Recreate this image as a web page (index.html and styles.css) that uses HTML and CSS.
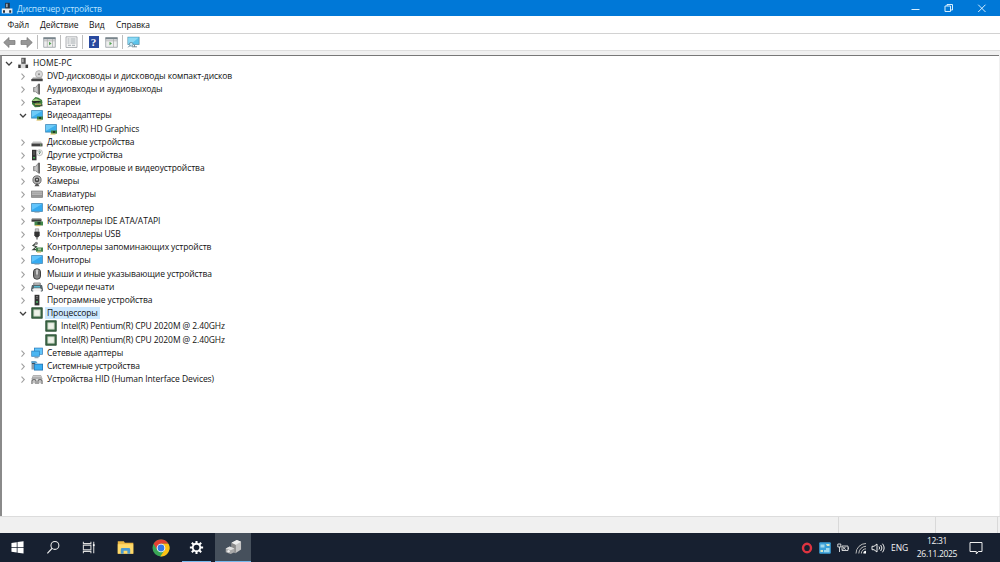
FILE: index.html
```html
<!DOCTYPE html>
<html lang="ru">

<head>
  <meta charset="UTF-8" />
  <meta name="viewport" content="width=device-width, initial-scale=1.0" />
  <title>Диспетчер устройств</title>
  <link rel="stylesheet" href="styles.css">
</head>

<body>
  <!-- иконки -->
  <svg class="sprite">
    <symbol id="close-arrow" viewBox="0 0 8 8"><path d="M2.5 1.6 5.3 4.6 2.5 7.6" fill="none" stroke="#a0a0a0" stroke-width="1.1" /></symbol>
    <symbol id="open-arrow" viewBox="0 0 8 8"><path d="M1 3 4 6 7 3" fill="none" stroke="#404040" stroke-width="1.3" /></symbol>
    <symbol id="pc" viewBox="0 0 12 12">
      <path d="M4.3 .8h4.4V7H4.3z" fill="#555" /><path d="M5.3 1.8h1.2v3.5H5.3z" fill="#ccc" />
      <path d="M1 6.8h10.4v4.4H1z" fill="#d9d9d9" /><path d="M1.3 7.8h2.4v3.2H1.3zM8.5 7.8H11v3.2H8.5z" fill="#3a3a3a" />
    </symbol>
    <symbol id="pc-title" viewBox="0 0 12 12">
      <path d="M4.2 .8h4.6V7H4.2z" fill="#26303c" /><path d="M5.3 1.8h1.2v3.5H5.3z" fill="#c5d5e4" />
      <path d="M.8 6.5h10.6v4.9H.8z" fill="#e9eef2" /><path d="M2 8.3h2v2.5H2zM8.2 8.3h2v2.5h-2z" fill="#26303c" />
    </symbol>
    <symbol id="dvd" viewBox="0 0 12 12">
      <circle cx="8" cy="4.2" r="3.6" fill="#d8d8d8" stroke="#999" stroke-width=".6" /><circle cx="8" cy="4.2" r="1" fill="#888" />
      <path d="M2 7.5h9l.8 2H.3z" fill="#999" /><path d="M.3 9h11.4v2.2H.3z" fill="#484848" />
    </symbol>
    <symbol id="speaker" viewBox="0 0 12 12">
      <path d="M2.5 4.5h2L7.5 1v10L4.5 8.7h-2z" fill="#b4b4b4" stroke="#808080" stroke-width=".8" /><path d="M7 .8h2v10.6H7.6z" fill="#666" />
      <path d="M5 4.5v4" stroke="#e5e5e5" stroke-width=".8" />
    </symbol>
    <symbol id="battery" viewBox="0 0 12 12">
      <path d="M1 4.5 4.5 1l3 .7L11 4l.5 3L9 11 4 11.3 1 8z" fill="#3d7f3d" /><path d="M1 4.5 5 2.5l5 2L6 7z" fill="#a5d287" />
      <path d="M.3 5.2 10 4.7 8 6.6 3 7z" fill="#222" /><path d="M3.5 8.3h8v2h-7z" fill="#46543a" /><path d="M4 8.2h6" stroke="#dfc964" />
    </symbol>
    <symbol id="monitor" viewBox="0 0 12 12">
      <path d="M.2 1.2h11.6v8.6H.2z" fill="#3180b4" /><path d="M.9 1.9h10.2v7.1H.9z" fill="#35aaf0" /><path d="M.9 1.9h10.2L.9 8z" fill="#62c5fc" />
      <path d="M3.5 10.4h5" stroke="#9bb0bb" stroke-width=".8" />
    </symbol>
    <symbol id="video" viewBox="0 0 12 12">
      <path d="M.2 1.2h11.6v8.3H.2z" fill="#3180b4" /><path d="M.9 1.9h10.2v6.8H.9z" fill="#3eb0ed" /><path d="M.9 1.9h10.2L.9 8z" fill="#6fcbf8" />
      <path d="M6 7.5h6v3.2H6z" fill="#3c8145" /><path d="M8 8h2v2H8z" fill="#213c2a" /><path d="M5.5 11.1h5" stroke="#d7b84e" stroke-width=".9" />
    </symbol>
    <symbol id="disk" viewBox="0 0 12 12"><path d="M2 5.5h8l1.5 2.2H.5z" fill="#c4c4c4" /><path d="M.5 7.5h11v2.9H.5z" fill="#404040" /><path d="M9 9h1.5" stroke="#86c880" /></symbol>
    <symbol id="other" viewBox="0 0 12 12">
      <path d="M1 .8h4.5v10.5H1z" fill="#333" /><path d="M2 3h2M2 5h2" stroke="#888" stroke-width=".7" /><path d="M2 8h2v1.5H2z" fill="#46a856" />
      <circle cx="8.5" cy="3.7" r="3" fill="#f2f2f2" stroke="#aaa" stroke-width=".7" />
      <path d="M7.5 2.9q1-1.4 2 0 0 .6-1 1v1.2" fill="none" stroke="#3b6f55" stroke-width=".8" />
    </symbol>
    <symbol id="camera" viewBox="0 0 12 12">
      <circle cx="6" cy="4.9" r="4.1" fill="#b5b5b5" stroke="#666" stroke-width=".9" /><circle cx="6" cy="4.9" r="2.3" fill="#444" /><circle cx="6" cy="4.7" r=".9" fill="#ddd" />
      <path d="M5 8.8h2l1.5 2.5h-5z" fill="#555" />
    </symbol>
    <symbol id="keyboard" viewBox="0 0 12 12"><path d="M.2 2.7h11.6v7H.2z" fill="#6f6f6f" /><path d="M1 3.3h10v4.2H1z" fill="#b5b5b5" /><path d="M1 5.3h10" stroke="#999" stroke-width=".6" /><path d="M1 8.5h10" stroke="#aaa" stroke-width=".7" /></symbol>
    <symbol id="ide" viewBox="0 0 12 12">
      <path d="M1 3h9l1 2H.5z" fill="#aaa" /><path d="M.5 4.5h10v2.2H.5z" fill="#3b3b3b" /><path d="M3.5 6.5H12v4H3.5z" fill="#42864a" />
      <path d="M6.5 7h3v2.5h-3z" fill="#213e29" /><path d="M4.5 10.7h5" stroke="#e0bd54" />
    </symbol>
    <symbol id="usb" viewBox="0 0 12 12"><path d="M4.3 .8h3.4V4H4.3z" fill="#ccc" stroke="#777" stroke-width=".6" /><path d="M3.3 3.8h5.4v3.5L7.3 9.3H4.7L3.3 7.3z" fill="#333" /><path d="M6 9v2.6" stroke="#555" stroke-width="1.2" /></symbol>
    <symbol id="storage" viewBox="0 0 12 12">
      <path d="M5 2 2 4.5l3.5 1.3L2 8.6h4" fill="none" stroke="#3a463c" stroke-width="1.1" /><circle cx="5.3" cy="2.3" r="1.6" fill="#888" />
      <path d="M5 6.5h7v4.2H5z" fill="#43824a" /><path d="M7 7.3h3v2H7z" fill="#a5c9a0" /><path d="M6 11.1h4" stroke="#d7b95c" />
    </symbol>
    <symbol id="mouse" viewBox="0 0 12 12"><rect x="2.5" y=".8" width="7" height="10.4" rx="3.2" fill="#8a8a8a" stroke="#3f3f3f" /><path d="M6 1.5v5" stroke="#fff" stroke-width="1.1" /><path d="M4 3.3v5M8 3.3v5" stroke="#555" stroke-width=".7" /></symbol>
    <symbol id="printer" viewBox="0 0 12 12">
      <path d="M2.7 2h6.6v2H2.7z" fill="#d8d8d8" stroke="#666" stroke-width=".7" /><path d="M1 4h10l1 4.3H0z" fill="#55646a" /><path d="M3 5h6v1.5H3z" fill="#5bbad0" />
      <path d="M2.5 7.3h7l.8 3H1.7z" fill="#f3f3f3" /><path d="M.7 8v2h1.5M11.3 8v2H9.8" fill="none" stroke="#48565a" />
    </symbol>
    <symbol id="software" viewBox="0 0 12 12"><path d="M3.6 .8h4.8v10.6H3.6z" fill="#333" /><path d="M5 2.5h2M5 4.2h2" stroke="#999" stroke-width=".7" /><path d="M5 7.3h2v1.5H5z" fill="#50b96a" /></symbol>
    <symbol id="cpu" viewBox="0 0 12 12"><path d="M.5 .5h11v11H.5z" fill="#3d6947" /><path d="M.8 .8h10.4v10.4H.8z" fill="none" stroke="#2a4a34" stroke-width=".7" /><path d="M2.7 2.7h6.6v6.6H2.7z" fill="#eef2e9" stroke="#a5baa3" stroke-width=".7" /></symbol>
    <symbol id="network" viewBox="0 0 12 12">
      <path d="M3 .7h8.8v7H3z" fill="#2b7aba" /><path d="M3.7 1.4H11V7H3.7z" fill="#62c5fa" />
      <path d="M.3 3.7h8.4v6H.3z" fill="#287cba" /><path d="M1 4.4h7v4.5H1z" fill="#4bb6f2" /><path d="M3.5 10.7h4" stroke="#7d93a3" />
    </symbol>
    <symbol id="system" viewBox="0 0 12 12">
      <path d="M.5 1h4v8.5h-4z" fill="#8d9ba5" /><path d="M1 2.8h3v1.2H1z" fill="#333" />
      <path d="M3 3.7h9v6.8H3z" fill="#2673af" /><path d="M3.7 4.5h7.6v5.2H3.7z" fill="#39aef2" /><path d="M.5 1.2h4.7l1.5 2H.5z" fill="#5ba5d3" />
    </symbol>
    <symbol id="hid" viewBox="0 0 12 12">
      <path d="M2 2.2h8l1.7 4H.3z" fill="#999" /><path d="M2 3.5h8M1.5 5H11" stroke="#ddd" stroke-width=".7" />
      <path d="M1 11V8.2q0-1.7 2-1.7t2 1.7V11M7 11V8.2q0-1.7 2-1.7t2 1.7V11" fill="none" stroke="#666" stroke-width="1.2" /><path d="M3 7v3.3M9 7v3.3" stroke="#888" />
    </symbol>
  </svg>

  <div class="window">
    <div class="title-bar">
      <svg class="title-icon"><use href="#pc-title" /></svg>
      <span class="title">Диспетчер устройств</span>
      <div class="controls">
        <svg viewBox="0 0 12 12"><path d="M1.5 7.5h8" /></svg>
        <svg viewBox="0 0 12 12"><path d="M2 4h5.5v5.5H2zM4 4V2.5h5.5V8h-2" /></svg>
        <svg viewBox="0 0 12 12"><path d="M2.2 2.7 9.5 10M9.5 2.7 2.2 10" /></svg>
      </div>
    </div>

    <div class="menu">
      <span class="m-file">Файл</span>
      <span class="m-action">Действие</span>
      <span class="m-view">Вид</span>
      <span>Справка</span>
    </div>

    <div class="toolbar">
      <svg class="tool" viewBox="0 0 13 12"><path d="M.7 6.5 6 1.5v3h6v4H6v3z" fill="#969696" stroke="#777" stroke-width=".7" /></svg>
      <svg class="tool forward" viewBox="0 0 13 12"><path d="M12.3 6.5 7 1.5v3H1v4h6v3z" fill="#969696" stroke="#777" stroke-width=".7" /></svg>
      <i class="sep"></i>
      <svg class="tool" viewBox="0 0 13 12"><path d="M.7 1.5h11.6v9.8H.7z" fill="#eee" stroke="#989fa5" stroke-width=".8" /><path d="M.5 2.4h12" stroke="#78858c" stroke-width="1.7" /><path d="M4.3 3v8M9.5 3v8M1 4.8h11" stroke="#aaa" stroke-width=".7" /><path d="M6 5.7 8.5 7.5 6 9.3z" fill="#52a052" /></svg>
      <i class="sep"></i>
      <svg class="tool" viewBox="0 0 13 12"><path d="M1 .8h11v10.7H1z" fill="#f5f5f5" stroke="#9ca0a3" stroke-width=".8" /><path d="M2.5 3h2M5.5 3h5M2.5 5h2M5.5 5h5M2.5 7h2M5.5 7h5M3 9.3h3M7 9.3h3" stroke="#9aa2a6" stroke-width=".9" /></svg>
      <i class="sep"></i>
      <span class="help">?</span>
      <svg class="tool" viewBox="0 0 13 12"><path d="M.7 1.5h11.6v9.8H.7z" fill="#eee" stroke="#989fa5" stroke-width=".8" /><path d="M.5 2.4h12" stroke="#78858c" stroke-width="1.7" /><path d="M8.5 3v8M1 4.8h11" stroke="#aaa" stroke-width=".7" /><path d="M4.5 5.7 7 7.5 4.5 9.3z" fill="#52a052" /></svg>
      <i class="sep"></i>
      <svg class="tool" viewBox="0 0 13 12"><path d="M.5 .8h12v8H.5z" fill="#4a8ea9" /><path d="M1.2 1.5h10.6v6.6H1.2z" fill="#5cc3ea" /><path d="M1.2 1.5h10.6L4 8.1H1.2z" fill="#8cd9f4" /><path d="M5 10.8h5M7.5 9v2" stroke="#778c96" /><circle cx="4.2" cy="8.3" r="1.9" fill="#c5e8f5" stroke="#557d91" stroke-width=".7" /><path d="m2.8 9.7-1.6 1.6" stroke="#557d91" /></svg>
    </div>

    <div class="tree">
      <div class="row root"><svg class="arrow"><use href="#open-arrow" /></svg><svg class="icon"><use href="#pc" /></svg><span>HOME-PC</span></div>
      <div class="row"><svg class="arrow"><use href="#close-arrow" /></svg><svg class="icon"><use href="#dvd" /></svg><span>DVD-дисководы и дисководы компакт-дисков</span></div>
      <div class="row"><svg class="arrow"><use href="#close-arrow" /></svg><svg class="icon"><use href="#speaker" /></svg><span>Аудиовходы и аудиовыходы</span></div>
      <div class="row"><svg class="arrow"><use href="#close-arrow" /></svg><svg class="icon"><use href="#battery" /></svg><span>Батареи</span></div>
      <div class="row"><svg class="arrow"><use href="#open-arrow" /></svg><svg class="icon"><use href="#video" /></svg><span>Видеоадаптеры</span></div>
      <div class="row child"><svg class="icon"><use href="#video" /></svg><span>Intel(R) HD Graphics</span></div>
      <div class="row"><svg class="arrow"><use href="#close-arrow" /></svg><svg class="icon"><use href="#disk" /></svg><span>Дисковые устройства</span></div>
      <div class="row"><svg class="arrow"><use href="#close-arrow" /></svg><svg class="icon"><use href="#other" /></svg><span>Другие устройства</span></div>
      <div class="row"><svg class="arrow"><use href="#close-arrow" /></svg><svg class="icon"><use href="#speaker" /></svg><span>Звуковые, игровые и видеоустройства</span></div>
      <div class="row"><svg class="arrow"><use href="#close-arrow" /></svg><svg class="icon"><use href="#camera" /></svg><span>Камеры</span></div>
      <div class="row"><svg class="arrow"><use href="#close-arrow" /></svg><svg class="icon"><use href="#keyboard" /></svg><span>Клавиатуры</span></div>
      <div class="row"><svg class="arrow"><use href="#close-arrow" /></svg><svg class="icon"><use href="#monitor" /></svg><span>Компьютер</span></div>
      <div class="row"><svg class="arrow"><use href="#close-arrow" /></svg><svg class="icon"><use href="#ide" /></svg><span>Контроллеры IDE ATA/ATAPI</span></div>
      <div class="row"><svg class="arrow"><use href="#close-arrow" /></svg><svg class="icon"><use href="#usb" /></svg><span>Контроллеры USB</span></div>
      <div class="row"><svg class="arrow"><use href="#close-arrow" /></svg><svg class="icon"><use href="#storage" /></svg><span>Контроллеры запоминающих устройств</span></div>
      <div class="row"><svg class="arrow"><use href="#close-arrow" /></svg><svg class="icon"><use href="#monitor" /></svg><span>Мониторы</span></div>
      <div class="row"><svg class="arrow"><use href="#close-arrow" /></svg><svg class="icon"><use href="#mouse" /></svg><span>Мыши и иные указывающие устройства</span></div>
      <div class="row"><svg class="arrow"><use href="#close-arrow" /></svg><svg class="icon"><use href="#printer" /></svg><span>Очереди печати</span></div>
      <div class="row"><svg class="arrow"><use href="#close-arrow" /></svg><svg class="icon"><use href="#software" /></svg><span>Программные устройства</span></div>
      <div class="row"><svg class="arrow"><use href="#open-arrow" /></svg><svg class="icon"><use href="#cpu" /></svg><span class="selected">Процессоры</span></div>
      <div class="row child"><svg class="icon"><use href="#cpu" /></svg><span>Intel(R) Pentium(R) CPU 2020M @ 2.40GHz</span></div>
      <div class="row child"><svg class="icon"><use href="#cpu" /></svg><span>Intel(R) Pentium(R) CPU 2020M @ 2.40GHz</span></div>
      <div class="row"><svg class="arrow"><use href="#close-arrow" /></svg><svg class="icon"><use href="#network" /></svg><span>Сетевые адаптеры</span></div>
      <div class="row"><svg class="arrow"><use href="#close-arrow" /></svg><svg class="icon"><use href="#system" /></svg><span>Системные устройства</span></div>
      <div class="row"><svg class="arrow"><use href="#close-arrow" /></svg><svg class="icon"><use href="#hid" /></svg><span>Устройства HID (Human Interface Devices)</span></div>
    </div>

    <div class="status"><i class="st-main"></i><i class="st-mid"></i><i class="st-end"></i></div>
  </div>

  <div class="taskbar">
    <div class="task start"><svg viewBox="0 0 18 18"><path d="M2.6 4.2 8.2 3.4v5.1H2.6zM9 3.3l6.4-.9v6.1H9zM2.6 9.3h5.6v5.1l-5.6-.8zM9 9.3h6.4v6.1L9 14.5z" fill="#fff" /></svg></div>
    <div class="task"><svg viewBox="0 0 18 18"><circle cx="10.5" cy="6.8" r="4.2" fill="none" stroke="#eee" stroke-width="1.1" /><path d="M7.6 9.8 2.5 15.2" stroke="#eee" stroke-width="1.2" /></svg></div>
    <div class="task"><svg viewBox="0 0 18 18"><path d="M2.5 3v1.8h8V3M2.5 15v-1.8h8V15M2.5 6.5h8v5h-8zM13.5 3v12" fill="none" stroke="#ddd" stroke-width="1.1" /><path d="M12.6 5.5h1.8v2h-1.8z" fill="#fff" /></svg></div>
    <div class="task"><svg viewBox="0 0 18 18"><path d="M.8 2.5h6.5l1 1.5h9v11.5H.8z" fill="#edb944" /><path d="M.8 5.5h16.4v10H.8z" fill="#ffda6a" /><path d="M4 15.5V11q0-1.5 1.5-1.5h7Q14 9.500 14 11v4.500h-3v-3H7v3z" fill="#4a9ad2" /></svg></div>
    <div class="task"><svg class="chrome" viewBox="0 0 18 18"><circle cx="9" cy="9" r="8.5" fill="#3aa757" /><path d="M1.6 4.8A8.5 8.5 0 0 1 16.4 4.8H9L5.4 11z" fill="#e34133" /><path d="M16.4 4.8A8.5 8.5 0 0 1 8.3 17.5L12.6 11 9 4.8z" fill="#fbc116" /><circle cx="9" cy="9" r="4.3" fill="#fff" /><circle cx="9" cy="9" r="3.4" fill="#3478e5" /></svg></div>
    <div class="task running"><svg viewBox="0 0 18 18"><circle cx="9" cy="9" r="4" fill="none" stroke="#fff" stroke-width="2" /><path d="M9 2v3M9 13v3M2 9h3M13 9h3M4.05 4.05l2.1 2.1M11.85 11.85l2.1 2.1M13.95 4.05l-2.1 2.1M6.15 11.85l-2.1 2.1" stroke="#fff" stroke-width="2.2" /></svg></div>
    <div class="task active"><svg viewBox="0 0 18 18"><path d="M7 4 12.5 1 17 3v8l-6 4-4-3z" fill="#c4c4c4" /><path d="m7 4 4.500 2v9L7 12z" fill="#8a8a8a" /><path d="m7 4 5.500-3L17 3l-5.500 3z" fill="#eee" /><path d="m.8 10 4.200-2 5 2v4l-4 2-5.200-2z" fill="#aaa" /><path d="m.8 10 4.200-2 5 2-4 2z" fill="#e0e0e0" /><circle cx="3.800" cy="13" r="1.300" fill="#eee" /></svg></div>

    <div class="tray">
      <svg class="opera" viewBox="0 0 12 12"><ellipse cx="6" cy="6" rx="4" ry="4.3" fill="none" stroke="#dd3440" stroke-width="2.4" /></svg>
      <svg class="app" viewBox="0 0 12 12"><rect x=".2" y=".2" width="11.6" height="11.6" rx="1" fill="#3ba0d8" /><path d="M1.5 2.5h4v3h-4zM7 6h3.500v4.200H5V8h2z" fill="#9ed8ee" /><path d="M7 2h3.500v2H8zM1.500 8h2.500v2H1.500z" fill="#dce7c6" /></svg>
      <svg class="power" viewBox="0 0 12 12"><path d="M.8 2h3v3h-3zM2.500 5v5M5 4h6v4.500H5zM11.600 5.300v2M5.500 4.700l3.200 3.200M8.700 4.700 5.500 7.900" fill="none" stroke="#e3e3e3" stroke-width=".9" /></svg>
      <svg class="wifi" viewBox="0 0 12 12"><path d="M1 11.500A10 10 0 0 1 11 1.500M3.800 11.500A7.300 7.300 0 0 1 11 4.300M6.300 11.500A4.700 4.700 0 0 1 11 6.800" fill="none" stroke="#bbb" stroke-width="1" /><path d="M8.300 11.500A2.700 2.700 0 0 1 11 8.800v2.700z" fill="#fff" /></svg>
      <svg class="volume" viewBox="0 0 14 12"><path d="M1 4.300h2L6 2v8L3 7.700H1zM8 4.500q1.200 1.500 0 3M9.700 3q2.500 3 0 6M11.500 1.700q3.300 4.300 0 8.600" fill="none" stroke="#eee" stroke-width="1" /></svg>
      <span class="lang">ENG</span>
      <div class="clock"><span>12:31</span><span>26.11.2025</span></div>
      <svg class="notice" viewBox="0 0 14 14"><path d="M1 1.500h12v9H9.300L7.300 13V10.500H1z" fill="none" stroke="#eee" stroke-width="1" /></svg>
    </div>
  </div>
</body>

</html>
```
FILE: styles.css
```css
* {
  box-sizing: border-box;
}

body {
  margin: 0;
  width: 1000px;
  height: 562px;
  overflow: hidden;
  display: flex;
  flex-direction: column;
  background: #f0f0f0;
  font-family: "Open Sans", "Noto Sans", sans-serif;
  font-size: 8.5px;
  letter-spacing: -0.08px;
  color: #111;
}

svg {
  display: block;
  flex: none;
}

.sprite {
  display: none;
}

.window {
  height: 533px;
  display: flex;
  flex-direction: column;
}

.title-bar {
  height: 16px;
  display: flex;
  align-items: center;
  background: #0078d7;
  color: #b9e3ff;
}

.title-icon {
  width: 12px;
  height: 12px;
  margin-left: 1px;
}

.title {
  margin-left: 4px;
  letter-spacing: -0.15px;
}

.controls {
  margin-left: auto;
  display: flex;
  gap: 21px;
  padding-right: 12px;
}

.controls svg {
  width: 12px;
  height: 12px;
  fill: none;
  stroke: #d7efff;
  stroke-width: 1;
}

.menu {
  height: 18px;
  display: flex;
  align-items: center;
  padding-left: 7.5px;
  background: #fff;
  border-bottom: 1px solid #d2d2d2;
}

.m-file {
  width: 32.5px;
}

.m-action {
  width: 49px;
}

.m-view {
  width: 27px;
}

.toolbar {
  height: 17px;
  display: flex;
  align-items: center;
  padding-left: 3px;
  background: #fff;
  border-bottom: 1px solid #dedede;
}

.tool {
  width: 13px;
  height: 12px;
}

.forward {
  margin-left: 4px;
}

.sep {
  width: 1px;
  height: 14px;
  margin: 0 5px 0 4px;
  background: #bdbdbd;
}

.tool + .sep {
  margin-right: 4.5px;
}

.help {
  width: 10px;
  height: 12px;
  margin: 0 6px 0 1px;
  background: #294a9f;
  color: #fff;
  font: bold 11px/12px "Liberation Serif", serif;
  text-align: center;
}

/* дерево устройств */
.tree {
  height: 461px;
  margin: 4px 1px 0 0;
  background: #fff;
  border-top: 1px solid #777;
  border-left: 2px solid #8a8a8a;
}

.row {
  height: 13.19px;
  display: flex;
  align-items: center;
  padding-left: 17px;
  white-space: nowrap;
}

.root {
  padding-left: 3px;
}

.child {
  padding-left: 43px;
}

.arrow {
  width: 8px;
  height: 8px;
}

.icon {
  width: 12px;
  height: 12px;
  margin-left: 4px;
}

.child .icon {
  margin-left: 0;
}

.row span {
  margin-left: 2px;
  padding: 0 2px;
  line-height: 12px;
}

.root span {
  letter-spacing: 0.05px;
}

.row .selected {
  background: #cce8ff;
}

.status {
  flex: 1;
  display: flex;
  border-top: 1px solid #dcdcdc;
}

.status i {
  border-right: 1px solid #d9d9d9;
}

.st-main {
  width: 839px;
}

.st-mid {
  width: 97px;
}

.st-end {
  width: 62px;
}

.taskbar {
  height: 29px;
  display: flex;
  background: #172030;
  color: #f4f4f4;
}

.task {
  width: 36px;
  display: flex;
  align-items: center;
  justify-content: center;
}

.task svg {
  width: 17px;
  height: 17px;
}

.task .chrome {
  width: 18px;
  height: 18px;
}

.start {
  width: 35px;
}

.running {
  width: 29px;
  margin: 0 4px 0 3px;
  border-bottom: 1px solid #76b9ed;
  padding-top: 1px;
}

.active {
  background: #46505c;
  border-bottom: 1px solid #76b9ed;
  padding-top: 1px;
}

.tray {
  margin-left: auto;
  display: flex;
  align-items: center;
  padding-right: 17px;
}

.opera,
.app,
.power,
.wifi {
  width: 12px;
  height: 12px;
  margin-right: 6px;
}

.wifi {
  margin-right: 4px;
}

.volume {
  width: 14px;
  height: 12px;
}

.lang {
  width: 18px;
  margin-left: 6px;
}

.clock {
  width: 42px;
  margin-left: 7px;
  display: flex;
  flex-direction: column;
  align-items: center;
  line-height: 12.5px;
  letter-spacing: -0.3px;
}

.notice {
  width: 14px;
  height: 14px;
  margin-left: 11px;
}
```
